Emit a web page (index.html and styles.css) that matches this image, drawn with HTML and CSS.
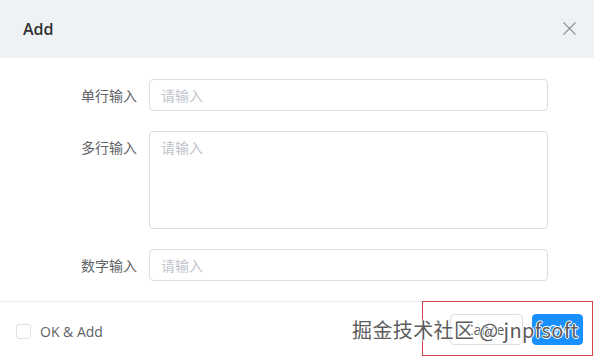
FILE: index.html
```html
<!DOCTYPE html>
<html lang="zh-CN">
<head>
    <meta charset="UTF-8">
    <meta name="viewport" content="width=device-width, initial-scale=1.0">
    <title>Add</title>
    <link rel="stylesheet" href="styles.css">
</head>
<body>
    <div class="dialog">
        <!-- Header -->
        <div class="dialog-header">
            <span class="dialog-title">Add</span>
            <button class="dialog-close" aria-label="Close">
                <svg width="13" height="13" viewBox="0 0 13 13">
                    <path d="M0.5 0.5 L12.5 12.5 M12.5 0.5 L0.5 12.5" stroke="#909399" stroke-width="1.2" fill="none"/>
                </svg>
            </button>
        </div>

        <!-- Body -->
        <form class="dialog-body">
            <div class="form-item">
                <label class="form-label" for="single">单行输入</label>
                <input class="form-input" type="text" id="single" placeholder="请输入">
            </div>
            <div class="form-item">
                <label class="form-label" for="multi">多行输入</label>
                <textarea class="form-input form-textarea" id="multi" placeholder="请输入"></textarea>
            </div>
            <div class="form-item">
                <label class="form-label" for="number">数字输入</label>
                <input class="form-input" type="text" id="number" placeholder="请输入">
            </div>
        </form>

        <!-- Footer -->
        <div class="dialog-footer">
            <label class="check">
                <span class="check-box"></span>
                <span>OK &amp; Add</span>
            </label>
            <div class="actions">
                <button class="btn">Cancel</button>
                <button class="btn btn-primary">OK</button>
            </div>
        </div>

        <div class="mark-box"></div>
        <div class="watermark">掘金技术社区 @ jnpfsoft</div>
    </div>
</body>
</html>
```

FILE: styles.css
```css
* {
    margin: 0;
    padding: 0;
    box-sizing: border-box;
    font-family: 'Open Sans', 'Noto Sans CJK SC', sans-serif;
}

body {
    background-color: #fff;
    color: #606266;
    width: 594px;
    height: 357px;
    overflow: hidden;
}

.dialog {
    position: relative;
    width: 594px;
    height: 357px;
}

.dialog-header {
    height: 58px;
    background-color: #eff2f5;
    display: flex;
    align-items: center;
    justify-content: space-between;
    padding: 0 18px 0 23px;
    border-bottom: 1px solid #f4f6f8;
}

.dialog-title {
    font-size: 16px;
    font-weight: 600;
    color: #303133;
}

.dialog-close {
    border: none;
    background: none;
    display: flex;
    cursor: pointer;
}

.dialog-body {
    padding: 21px 46px 0 0;
}

.form-item {
    display: flex;
    margin-bottom: 20px;
}

.form-label {
    width: 149px;
    flex-shrink: 0;
    padding-right: 12px;
    text-align: right;
    font-size: 14px;
    line-height: 32px;
    color: #606266;
    font-family: 'Noto Sans CJK SC', sans-serif;
}

.form-input {
    flex: 1;
    height: 32px;
    padding: 0 11px;
    border: 1px solid #dcdfe6;
    border-radius: 4px;
    font-size: 14px;
    color: #606266;
    outline: none;
}

.form-input::placeholder {
    color: #c0c4cc;
    font-family: 'Noto Sans CJK SC', sans-serif;
}

.form-textarea {
    height: 98px;
    padding: 5px 11px;
    line-height: 20px;
    resize: none;
}

.dialog-footer {
    border-top: 1px solid #ebeef5;
    display: flex;
    align-items: flex-start;
    justify-content: space-between;
    padding: 12px 11px 0 16px;
}

.check {
    display: flex;
    align-items: center;
    gap: 9px;
    font-size: 14px;
    color: #606266;
    margin-top: 8px;
}

.check-box {
    width: 15px;
    height: 15px;
    border: 1px solid #dcdfe6;
    border-radius: 3px;
    background: #fff;
}

.actions {
    display: flex;
    gap: 9px;
}

.btn {
    height: 31px;
    padding: 0 14px;
    font-size: 14px;
    border: 1px solid #dcdfe6;
    border-radius: 4px;
    background: #fff;
    color: #606266;
    cursor: pointer;
}

.btn-primary {
    width: 51px;
    padding: 0;
    background: #1890ff;
    border-color: #1890ff;
    color: #fff;
}

.mark-box {
    position: absolute;
    left: 422px;
    top: 301px;
    width: 171px;
    height: 55px;
    border: 1px solid #d0464b;
}

.watermark {
    position: absolute;
    left: 352px;
    top: 317px;
    font-size: 20px;
    line-height: 26px;
    color: #5c5c5c;
    white-space: nowrap;
    letter-spacing: 0.4px;
    text-shadow: 1px 0 0 #fff, -1px 0 0 #fff, 0 1px 0 #fff, 0 -1px 0 #fff;
    font-family: 'Noto Sans CJK SC', sans-serif;
}
```
